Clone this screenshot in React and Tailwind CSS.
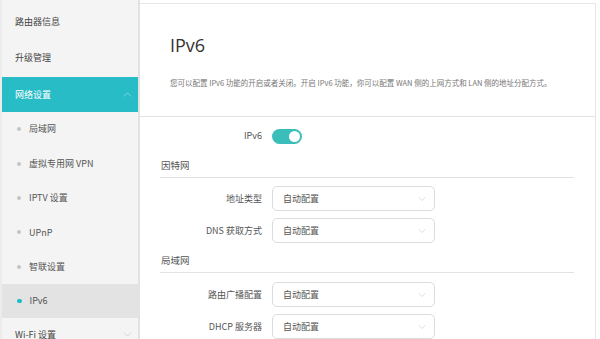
import React from "react";
import { ChevronUp, ChevronDown } from "lucide-react";

const font = "font-['Noto_Sans_CJK_SC',sans-serif]";

const subItems = ["局域网", "虚拟专用网 VPN", "IPTV 设置", "UPnP", "智联设置"];

const Select = ({ value }) => (
  <div className="w-[163px] h-[25px] border border-[#dcdcdc] rounded-[5px] flex items-center justify-between pl-[10px] pr-[6px] bg-white">
    <span className="text-[9px] text-[#555]">{value}</span>
    <ChevronDown size={12} strokeWidth={1} className="text-[#bbb]" />
  </div>
);

const FormRow = ({ label, children, className = "" }) => (
  <div className={`flex items-center shrink-0 ${className}`}>
    <div className="w-[122px] text-right text-[9px] text-[#555]">{label}</div>
    <div className="ml-[10px]">{children}</div>
  </div>
);

const Section = ({ title, className = "" }) => (
  <div className={`shrink-0 ml-[20px] mr-[21px] h-[22px] border-b border-[#e3e3e3] ${className}`}>
    <span className="block pl-[1px] text-[9.5px] leading-[18px] text-[#555]">{title}</span>
  </div>
);

const App = () => {
  return (
    <div className={`w-[600px] h-[339px] overflow-hidden flex bg-white ${font}`}>
      {/* Sidebar */}
      <div className="w-[140px] shrink-0 bg-[#f4f4f4] border-l-2 border-l-[#ececec] border-r-2 border-r-[#e2e2e2] flex flex-col">
        <div className="h-[4px] shrink-0" />
        <div className="h-[36px] shrink-0 flex items-center pl-[13px] text-[9px] text-[#444]">路由器信息</div>
        <div className="h-[36px] shrink-0 flex items-center pl-[13px] text-[9px] text-[#444]">升级管理</div>
        <div className="h-[35px] shrink-0 mt-[1px] bg-[#28bcc6] flex items-center justify-between pl-[13px] pr-[4px] text-[9px] text-white">
          <span>网络设置</span>
          <ChevronUp size={13} strokeWidth={1} className="text-[#bfeef1]" />
        </div>
        {subItems.map((s) => (
          <div key={s} className="h-[34.4px] shrink-0 flex items-center pl-[15px] text-[9px] text-[#555]">
            <span className="w-[4px] h-[4px] rounded-full bg-[#c4c4c4] mr-[8px]" />
            {s}
          </div>
        ))}
        <div className="h-[34.4px] shrink-0 flex items-center pl-[15px] text-[9px] text-[#555] bg-[#e3e3e3]">
          <span className="w-[4.5px] h-[4.5px] rounded-full bg-[#1cb9c7] mr-[8px]" />
          IPv6
        </div>
        <div className="h-[32px] shrink-0 flex items-center justify-between pl-[13px] pr-[4px] text-[9px] text-[#444]">
          <span>Wi-Fi 设置</span>
          <ChevronDown size={13} strokeWidth={1} className="text-[#bbb]" />
        </div>
      </div>

      {/* Main */}
      <div className="flex-1 pt-[3px] pr-[4px]">
        <div className="h-full border-t border-r border-[#e6e6e6] flex flex-col">
          {/* Header */}
          <div className="h-[113px] shrink-0 border-b border-[#e3e3e3] pl-[30px] pt-[29px]">
            <div className="font-['Open_Sans',sans-serif] text-[18px] leading-[24px] text-[#333]">IPv6</div>
            <div className="mt-[20px] text-[7.5px] leading-[12px] text-[#777]">
              您可以配置 IPv6 功能的开启或者关闭。开启 IPv6 功能，你可以配置 WAN 侧的上网方式和 LAN 侧的地址分配方式。
            </div>
          </div>

          {/* Form */}
          <div className="flex flex-col">
            <FormRow label="IPv6" className="h-[20px] mt-[9px]">
              <div className="w-[30px] h-[15px] rounded-full bg-[#3bbdba] flex items-center justify-end pr-[2px]">
                <div className="w-[11px] h-[11px] rounded-full bg-white" />
              </div>
            </FormRow>

            <Section title="因特网" className="mt-[10px]" />
            <FormRow label="地址类型" className="mt-[8px]">
              <Select value="自动配置" />
            </FormRow>
            <FormRow label="DNS 获取方式" className="mt-[7px]">
              <Select value="自动配置" />
            </FormRow>

            <Section title="局域网" className="mt-[8px]" />
            <FormRow label="路由广播配置" className="mt-[9px]">
              <Select value="自动配置" />
            </FormRow>
            <FormRow label="DHCP 服务器" className="mt-[7px]">
              <Select value="自动配置" />
            </FormRow>
          </div>
        </div>
      </div>
    </div>
  );
};

export default App;
